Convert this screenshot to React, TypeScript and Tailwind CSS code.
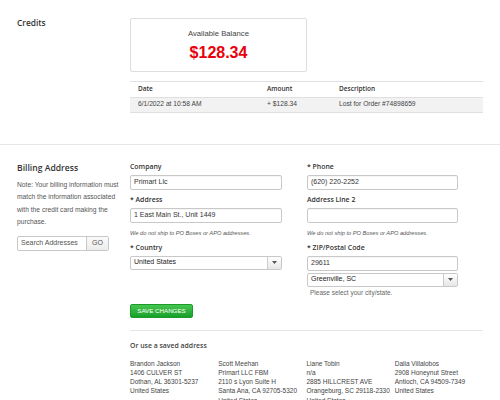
import React from "react";

const semi = "font-['Open_Sans',sans-serif] font-semibold";

function Arrow() {
  return (
    <div className="flex w-[14px] shrink-0 items-center justify-center border-l border-[#ccc] bg-gradient-to-b from-white to-[#e6e6e6]">
      <svg width="5" height="3" viewBox="0 0 5 3">
        <path d="M0 0 L5 0 L2.5 3 Z" fill="#555" />
      </svg>
    </div>
  );
}

function Label({ children }: { children: React.ReactNode }) {
  return <div className={`${semi} text-[6.9px] leading-[10px] text-[#333]`}>{children}</div>;
}

function TextBox({ value, className = "" }: { value: string; className?: string }) {
  return (
    <div
      className={`flex h-[15px] items-center rounded-[2px] border border-[#c8c8c8] px-[3px] text-[7px] text-[#333] shadow-[inset_0_1px_1px_rgba(0,0,0,0.04)] ${className}`}
    >
      {value}
    </div>
  );
}

function SelectBox({ value, className = "" }: { value: string; className?: string }) {
  return (
    <div className={`flex h-[14px] overflow-hidden rounded-[2px] border border-[#c8c8c8] ${className}`}>
      <div className="flex flex-1 items-center px-[3px] text-[7px] text-[#222]">{value}</div>
      <Arrow />
    </div>
  );
}

const addresses = [
  ["Brandon Jackson", "1406 CULVER ST", "Dothan, AL 36301-5237", "United States"],
  ["Scott Meehan", "Primart LLC FBM", "2110 s Lyon Suite H", "Santa Ana, CA 92705-5320", "United States"],
  ["Liane Tobin", "n/a", "2885 HILLCREST AVE", "Orangeburg, SC 29118-2330", "United States"],
  ["Dalia Villalobos", "2908 Honeynut Street", "Antioch, CA 94509-7349", "United States"],
];

export default function App() {
  return (
    <div className="min-h-[400px] w-[500px] bg-white font-['Liberation_Sans',Arial,sans-serif] text-[#444]">
      {/* Credits */}
      <section className="flex px-[17px] pb-[31px] pt-[18px]">
        <div className="w-[113px] shrink-0">
          <h2 className={`${semi} text-[8.4px] leading-[10px] text-[#333]`}>Credits</h2>
        </div>
        <div className="flex-1">
          <div className="flex h-[54px] w-[177px] flex-col items-center rounded-[2px] border border-[#ddd] pt-[10px]">
            <div className="text-[7.7px] leading-[10px] text-[#444]">Available Balance</div>
            <div className="mt-[5px] text-[16px] font-bold leading-[18px] text-[#e8000b]">$128.34</div>
          </div>
          <div className="mt-[9px] border-t border-[#e0e0e0] text-[6.7px]">
            <div className={`flex h-[14.5px] items-center ${semi} text-[6.5px] text-[#333]`}>
              <div className="w-[137px] pl-[8px]">Date</div>
              <div className="w-[72px]">Amount</div>
              <div>Description</div>
            </div>
            <div className="flex h-[16px] items-center border-y border-[#e0e0e0] bg-[#f2f2f2] text-[#444]">
              <div className="w-[137px] pl-[8px]">6/1/2022 at 10:58 AM</div>
              <div className="w-[72px]">+ $128.34</div>
              <div>Lost for Order #74898659</div>
            </div>
          </div>
        </div>
      </section>

      {/* Billing address */}
      <section className="flex border-t border-[#e6e6e6] px-[17px] pt-[17px]">
        <div className="w-[113px] shrink-0">
          <h2 className={`${semi} text-[8.6px] leading-[12px] text-[#333]`}>Billing Address</h2>
          <p className="mt-[5px] w-[106px] text-[6.7px] leading-[12.5px] text-[#555]">
            Note: Your billing information must match the information associated with the credit card making the
            purchase.
          </p>
          <div className="mt-[7px] flex h-[15px] w-[92px] overflow-hidden rounded-[2px] border border-[#c8c8c8]">
            <div className="flex w-[68px] items-center px-[3px] text-[7px] text-[#555]">Search Addresses</div>
            <div className="flex flex-1 items-center justify-center border-l border-[#c8c8c8] bg-gradient-to-b from-[#fafafa] to-[#ececec] text-[7px] text-[#555]">
              GO
            </div>
          </div>
        </div>

        <div className="flex-1">
          <div className="grid grid-cols-[152px_151px] gap-x-[25px]">
            <div>
              <Label>Company</Label>
              <TextBox value="Primart Llc" className="mt-[3px]" />
              <div className="mt-[5px]">
                <Label>* Address</Label>
              </div>
              <TextBox value="1 East Main St., Unit 1449" className="mt-[3px]" />
              <div className="mt-[6px] text-[5.7px] italic leading-[8px] text-[#555]">
                We do not ship to PO Boxes or APO addresses.
              </div>
              <div className="mt-[6px]">
                <Label>* Country</Label>
              </div>
              <SelectBox value="United States" className="mt-[3px]" />
            </div>
            <div>
              <Label>* Phone</Label>
              <TextBox value="(620) 220-2252" className="mt-[3px]" />
              <div className="mt-[5px]">
                <Label>Address Line 2</Label>
              </div>
              <TextBox value="" className="mt-[3px]" />
              <div className="mt-[6px] text-[5.7px] italic leading-[8px] text-[#555]">
                We do not ship to PO Boxes or APO addresses.
              </div>
              <div className="mt-[6px]">
                <Label>* ZIP/Postal Code</Label>
              </div>
              <TextBox value="29611" className="mt-[3px] h-[14px]" />
              <SelectBox value="Greenville, SC" className="mt-[2px]" />
              <div className="mt-[1px] pl-[3px] text-[6.5px] leading-[10px] text-[#666]">
                Please select your city/state.
              </div>
            </div>
          </div>

          <button className="mt-[6px] flex h-[14px] w-[63px] items-center justify-center rounded-[2px] border border-[#1c9a2a] bg-gradient-to-b from-[#45c650] to-[#14a02a] text-[6.2px] text-white">
            SAVE CHANGES
          </button>

          <div className="mt-[12px] border-t border-[#e6e6e6]" />

          <h3 className={`mt-[10px] ${semi} text-[6.9px] leading-[10px] text-[#444]`}>Or use a saved address</h3>

          <div className="mt-[8px] grid grid-cols-4 text-[6.5px] leading-[9.3px] text-[#444]">
            {addresses.map((lines, i) => (
              <div key={i}>
                {lines.map((l, j) => (
                  <div key={j}>{l}</div>
                ))}
              </div>
            ))}
          </div>
        </div>
      </section>
    </div>
  );
}
